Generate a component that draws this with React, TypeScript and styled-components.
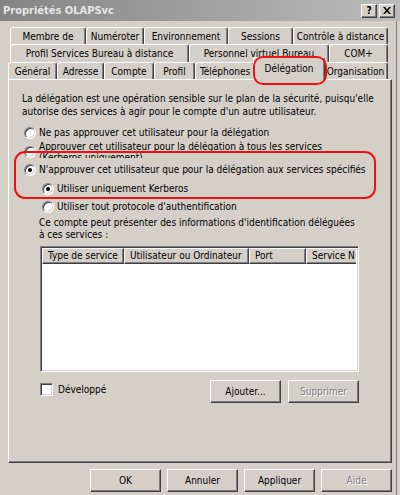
import React from "react";
import styled, { createGlobalStyle, css } from "styled-components";

const face = "#d4d0c8";
const shadow = "#808080";
const dark = "#404040";
const red = "#ee1111";

const GlobalStyle = createGlobalStyle`
  html, body { margin: 0; padding: 0; background: ${face}; }
  body {
    font-family: "DejaVu Sans Condensed", "DejaVu Sans", sans-serif;
    font-stretch: condensed;
    font-size: 10px;
    color: #000;
  }
`;

const Window = styled.div`
  width: 400px;
  height: 495px;
  box-sizing: border-box;
  background: ${face};
  display: flex;
  flex-direction: column;
  overflow: hidden;
  box-shadow: inset -3px 0 ${face}, inset -4px 0 ${shadow};
`;

const TitleBar = styled.div`
  height: 21px;
  flex: none;
  display: flex;
  align-items: center;
  padding: 0 5px 0 3px;
  background: linear-gradient(to right, #848484, #bcbcbc);
  color: #e6e6e6;
  font-weight: bold;
  font-size: 11px;
`;

const Title = styled.span`
  flex: 1;
`;

const CaptionButton = styled.div`
  width: 16px;
  height: 14px;
  box-sizing: border-box;
  margin-left: 2px;
  background: ${face};
  border: 1px solid;
  border-color: #fff ${dark} ${dark} #fff;
  box-shadow: inset -1px -1px ${shadow};
  display: flex;
  align-items: center;
  justify-content: center;
  color: #000;
  font-weight: bold;
  font-family: "DejaVu Sans", sans-serif;
  font-size: 10px;
`;

const Body = styled.div`
  padding: 6px 8px 0 8px;
  display: flex;
  flex-direction: column;
`;

const TabRow = styled.div<{ $h: number; $indent: number }>`
  display: flex;
  align-items: flex-end;
  height: ${(p) => p.$h}px;
  padding-left: ${(p) => p.$indent}px;
`;

const Tab = styled.div<{ $w: number; $active?: boolean }>`
  width: ${(p) => p.$w}px;
  flex: none;
  box-sizing: border-box;
  height: 100%;
  border: 1px solid;
  border-color: #fff ${dark} transparent #fff;
  border-bottom: none;
  border-radius: 3px 3px 0 0;
  box-shadow: inset -1px 0 ${shadow};
  background: ${face};
  text-align: center;
  white-space: nowrap;
  overflow: hidden;
  line-height: 14px;
  padding-top: 2px;
  ${(p) =>
    p.$active &&
    css`
      position: relative;
      z-index: 1;
      width: ${p.$w + 4}px;
      height: 23px;
      margin: 0 -2px -1px;
      padding-top: 4px;
      overflow: visible;
    `}
`;

const TabMark = styled.span`
  position: absolute;
  left: -1px;
  right: -3px;
  top: -2px;
  bottom: -5px;
  border: 2px solid ${red};
  border-radius: 10px;
  pointer-events: none;
`;

const Panel = styled.div`
  height: 384px;
  box-sizing: border-box;
  border: 1px solid;
  border-color: #fff ${dark} ${dark} #fff;
  box-shadow: inset -1px -1px ${shadow};
  padding: 12px 13px 0 13px;
  display: flex;
  flex-direction: column;
`;

const Paragraph = styled.div<{ $lh: number; $mt?: number; $indent?: number }>`
  line-height: ${(p) => p.$lh}px;
  margin-top: ${(p) => p.$mt ?? 0}px;
  margin-left: ${(p) => p.$indent ?? 0}px;
  white-space: nowrap;
`;

const Options = styled.div`
  padding-left: 2px;
  display: flex;
  flex-direction: column;
`;

const RadioRow = styled.div<{ $mt: number; $h?: number; $indent?: number }>`
  display: flex;
  align-items: ${(p) => (p.$h ? "flex-start" : "center")};
  gap: 3px;
  margin-top: ${(p) => p.$mt}px;
  margin-left: ${(p) => p.$indent ?? 0}px;
  height: ${(p) => p.$h ?? 13}px;
  overflow: hidden;
  white-space: nowrap;
`;

const RadioMark = styled.span<{ $on?: boolean; $top?: number }>`
  width: 12px;
  height: 12px;
  flex: none;
  box-sizing: border-box;
  border-radius: 50%;
  background: #fff;
  border: 1px solid;
  border-color: ${shadow} #fff #fff ${shadow};
  box-shadow: inset 1px 1px ${dark}, inset -1px -1px ${face};
  position: relative;
  margin-top: ${(p) => p.$top ?? 0}px;
  &::after {
    content: "";
    display: ${(p) => (p.$on ? "block" : "none")};
    position: absolute;
    left: 3px;
    top: 3px;
    width: 4px;
    height: 4px;
    border-radius: 50%;
    background: #000;
  }
`;

const TwoLineLabel = styled.span`
  line-height: 11px;
`;

const Highlight = styled.div`
  position: relative;
  display: flex;
  flex-direction: column;
  &::after {
    content: "";
    position: absolute;
    left: -10px;
    right: 2px;
    top: -7px;
    bottom: -4px;
    border: 2px solid ${red};
    border-radius: 11px;
    pointer-events: none;
  }
`;

const Details = styled.div`
  margin-left: 18px;
  width: 319px;
  display: flex;
  flex-direction: column;
`;

const ListBox = styled.div`
  margin-top: 5px;
  height: 126px;
  box-sizing: border-box;
  background: #fff;
  border: 1px solid;
  border-color: ${shadow} #fff #fff ${shadow};
  box-shadow: inset 1px 1px ${dark}, inset -1px -1px ${face};
  padding: 1px 2px 2px 1px;
  overflow: hidden;
`;

const HeaderRow = styled.div`
  display: flex;
  height: 16px;
  overflow: hidden;
`;

const HeaderCell = styled.div<{ $w: number }>`
  width: ${(p) => p.$w}px;
  flex: none;
  box-sizing: border-box;
  background: ${face};
  border: 1px solid;
  border-color: #fff ${dark} ${dark} #fff;
  box-shadow: inset -1px -1px ${shadow};
  padding-left: 5px;
  line-height: 13px;
  white-space: nowrap;
  overflow: hidden;
`;

const ActionRow = styled.div`
  display: flex;
  align-items: flex-start;
  margin-top: 8px;
`;

const CheckLabel = styled.label`
  display: flex;
  align-items: center;
  gap: 5px;
  margin-top: 3px;
  flex: 1;
  height: 13px;
`;

const CheckBox = styled.span`
  width: 13px;
  height: 13px;
  box-sizing: border-box;
  background: #fff;
  border: 1px solid;
  border-color: ${shadow} #fff #fff ${shadow};
  box-shadow: inset 1px 1px ${dark}, inset -1px -1px ${face};
`;

const Button = styled.button<{ $w?: number }>`
  width: ${(p) => p.$w ?? 71}px;
  height: 23px;
  box-sizing: border-box;
  padding: 0;
  background: ${face};
  border: 1px solid;
  border-color: #fff ${dark} ${dark} #fff;
  box-shadow: inset -1px -1px ${shadow};
  font: inherit;
  color: #000;
  &:disabled {
    color: ${shadow};
    text-shadow: 1px 1px #fff;
  }
`;

const ButtonGroup = styled.div<{ $gap: number }>`
  display: flex;
  gap: ${(p) => p.$gap}px;
`;

const Footer = styled.div`
  display: flex;
  justify-content: flex-end;
  gap: 6px;
  margin-top: 6px;
`;

const rows: { h: number; indent: number; tabs: [string, number][] }[] = [
  {
    h: 17,
    indent: 2,
    tabs: [
      ["Membre de", 76],
      ["Numéroter", 58],
      ["Environnement", 84],
      ["Sessions", 65],
      ["Contrôle à distance", 95],
    ],
  },
  {
    h: 18,
    indent: 2,
    tabs: [
      ["Profil Services Bureau à distance", 179],
      ["Personnel virtuel Bureau", 140],
      ["COM+", 59],
    ],
  },
  {
    h: 17,
    indent: 0,
    tabs: [
      ["Général", 49],
      ["Adresse", 47],
      ["Compte", 50],
      ["Profil", 41],
      ["Téléphones", 60],
      ["Délégation", 68],
      ["Organisation", 65],
    ],
  },
];

const columns: [string, number][] = [
  ["Type de service", 82],
  ["Utilisateur ou Ordinateur", 125],
  ["Port", 57],
  ["Service N", 90],
];

const App = () => {
  return (
    <Window>
      <GlobalStyle />
      <TitleBar>
        <Title>Propriétés OLAPSvc</Title>
        <CaptionButton>?</CaptionButton>
        <CaptionButton>
          <svg width="8" height="7" viewBox="0 0 8 7">
            <path d="M0 0h2l2 2.5L6 0h2L5 3.5 8 7H6L4 4.5 2 7H0l3-3.5z" fill="#000" />
          </svg>
        </CaptionButton>
      </TitleBar>
      <Body>
        {rows.map((row, i) => (
          <TabRow key={i} $h={row.h} $indent={row.indent}>
            {row.tabs.map(([label, w]) => {
              const active = label === "Délégation";
              return (
                <Tab key={label} $w={w} $active={active}>
                  {label}
                  {active && <TabMark />}
                </Tab>
              );
            })}
          </TabRow>
        ))}
        <Panel>
          <Paragraph $lh={13}>
            La délégation est une opération sensible sur le plan de la sécurité, puisqu'elle
            <br />
            autorise des services à agir pour le compte d'un autre utilisateur.
          </Paragraph>
          <Options>
            <RadioRow $mt={8}>
              <RadioMark />
              Ne pas approuver cet utilisateur pour la délégation
            </RadioRow>
            <RadioRow $mt={2} $h={17}>
              <RadioMark $top={5} />
              <TwoLineLabel>
                Approuver cet utilisateur pour la délégation à tous les services
                <br />
                (Kerberos uniquement)
              </TwoLineLabel>
            </RadioRow>
            <Highlight>
              <RadioRow $mt={5}>
                <RadioMark $on />
                N'approuver cet utilisateur que pour la délégation aux services spécifiés
              </RadioRow>
              <RadioRow $mt={6} $indent={18}>
                <RadioMark $on />
                Utiliser uniquement Kerberos
              </RadioRow>
            </Highlight>
            <RadioRow $mt={5} $indent={18}>
              <RadioMark />
              Utiliser tout protocole d'authentification
            </RadioRow>
          </Options>
          <Paragraph $lh={12} $mt={4} $indent={17}>
            Ce compte peut présenter des informations d'identification déléguées
            <br />à ces services :
          </Paragraph>
          <Details>
            <ListBox>
              <HeaderRow>
                {columns.map(([label, w]) => (
                  <HeaderCell key={label} $w={w}>
                    {label}
                  </HeaderCell>
                ))}
              </HeaderRow>
            </ListBox>
            <ActionRow>
              <CheckLabel>
                <CheckBox />
                Développé
              </CheckLabel>
              <ButtonGroup $gap={7}>
                <Button>Ajouter...</Button>
                <Button disabled>Supprimer</Button>
              </ButtonGroup>
            </ActionRow>
          </Details>
        </Panel>
        <Footer>
          <Button>OK</Button>
          <Button>Annuler</Button>
          <Button>Appliquer</Button>
          <Button disabled>Aide</Button>
        </Footer>
      </Body>
    </Window>
  );
};

export default App;
